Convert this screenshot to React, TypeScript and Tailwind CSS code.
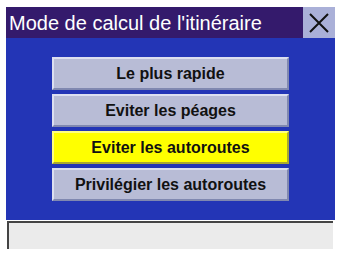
import React from "react";

const items = [
  { label: "Le plus rapide", active: false },
  { label: "Eviter les péages", active: false },
  { label: "Eviter les autoroutes", active: true },
  { label: "Privilégier les autoroutes", active: false },
];

export default function App() {
  return (
    <div className="w-[337px] h-[253px] bg-white pt-[7px] pl-[6px] pr-[2px] pb-[4px]" style={{ fontFamily: '"Liberation Sans", Arial, sans-serif' }}>
      <div className="flex flex-col w-[329px] h-[242px]">
        <div className="flex h-[31px] bg-[#341a6c]">
          <div className="flex-1 flex items-center pl-[3px] text-white text-[20px] leading-none">
            Mode de calcul de l'itinéraire
          </div>
          <div className="w-[32px] h-full bg-[#aab0d8] flex items-center justify-center">
            <svg width="22" height="22" viewBox="0 0 22 22">
              <path d="M2 2 L20 20 M20 2 L2 20" stroke="#111" strokeWidth="2" fill="none" />
            </svg>
          </div>
        </div>
        <div className="h-[182px] bg-[#2335b6] flex flex-col items-center pt-[19px] gap-[4px]">
          {items.map((it) => (
            <div
              key={it.label}
              className={`w-[237px] h-[33px] flex items-center justify-center text-[16px] font-bold text-[#111] border-t-2 border-l-2 border-b-2 border-r-2 ${
                it.active
                  ? "bg-[#ffff00] border-t-[#ffff80] border-l-[#ffff80] border-b-[#a8a830] border-r-[#a8a830]"
                  : "bg-[#b8bcd6] border-t-[#dcdff0] border-l-[#dcdff0] border-b-[#8088b0] border-r-[#8088b0]"
              }`}
            >
              {it.label}
            </div>
          ))}
        </div>
        <div className="ml-[1px] mt-[1px] w-[326px] h-[28px] bg-[#ebebeb] border-t-2 border-l-2 border-t-[#444] border-l-[#444]" />
      </div>
    </div>
  );
}
